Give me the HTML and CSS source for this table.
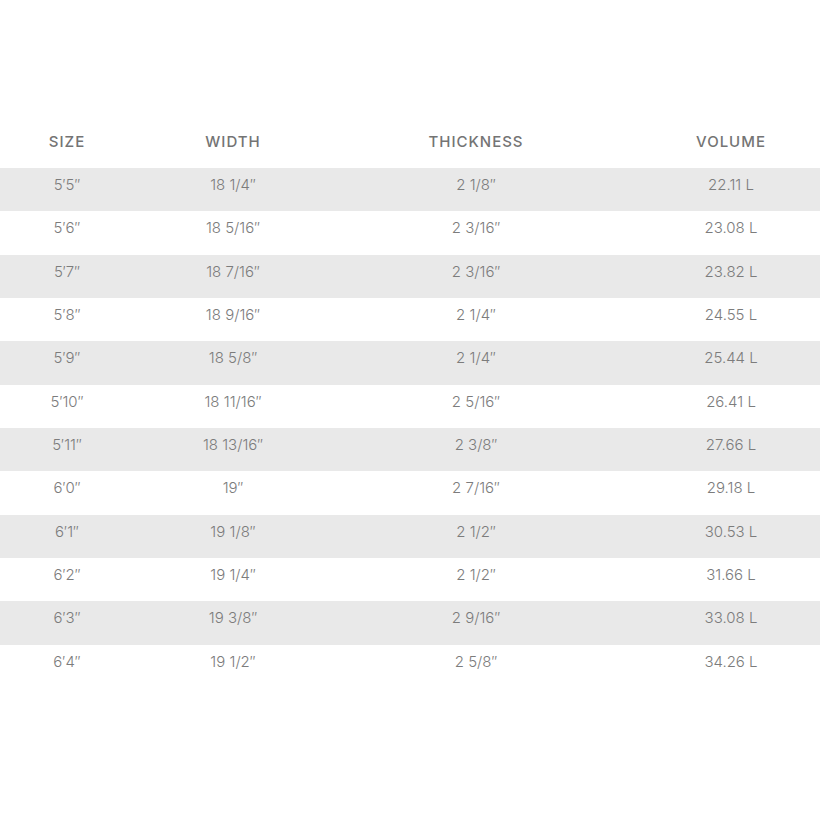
FILE: index.html
```html
<!DOCTYPE html>
<html>
<head>
<meta charset="utf-8">
<link rel="stylesheet" href="styles.css">
</head>
<body>
<div class="table">
  <div class="row head"><div class="c">SIZE</div><div class="c">WIDTH</div><div class="c">THICKNESS</div><div class="c c4">VOLUME</div></div>
  <div class="row alt"><div class="c">5′5″</div><div class="c">18 1/4″</div><div class="c">2 1/8″</div><div class="c c4">22.11 L</div></div>
  <div class="row"><div class="c">5′6″</div><div class="c">18 5/16″</div><div class="c">2 3/16″</div><div class="c c4">23.08 L</div></div>
  <div class="row alt"><div class="c">5′7″</div><div class="c">18 7/16″</div><div class="c">2 3/16″</div><div class="c c4">23.82 L</div></div>
  <div class="row"><div class="c">5′8″</div><div class="c">18 9/16″</div><div class="c">2 1/4″</div><div class="c c4">24.55 L</div></div>
  <div class="row alt"><div class="c">5′9″</div><div class="c">18 5/8″</div><div class="c">2 1/4″</div><div class="c c4">25.44 L</div></div>
  <div class="row"><div class="c">5′10″</div><div class="c">18 11/16″</div><div class="c">2 5/16″</div><div class="c c4">26.41 L</div></div>
  <div class="row alt"><div class="c">5′11″</div><div class="c">18 13/16″</div><div class="c">2 3/8″</div><div class="c c4">27.66 L</div></div>
  <div class="row"><div class="c">6′0″</div><div class="c">19″</div><div class="c">2 7/16″</div><div class="c c4">29.18 L</div></div>
  <div class="row alt"><div class="c">6′1″</div><div class="c">19 1/8″</div><div class="c">2 1/2″</div><div class="c c4">30.53 L</div></div>
  <div class="row"><div class="c">6′2″</div><div class="c">19 1/4″</div><div class="c">2 1/2″</div><div class="c c4">31.66 L</div></div>
  <div class="row alt"><div class="c">6′3″</div><div class="c">19 3/8″</div><div class="c">2 9/16″</div><div class="c c4">33.08 L</div></div>
  <div class="row"><div class="c">6′4″</div><div class="c">19 1/2″</div><div class="c">2 5/8″</div><div class="c c4">34.26 L</div></div>
</div>
</body>
</html>
```

FILE: styles.css
```css
html, body {
  margin: 0;
  padding: 0;
  background: #ffffff;
}
body {
  font-family: Inter, "Open Sans", sans-serif;
  font-size: 15px;
  font-weight: 300;
  color: #7c7c7c;
}
.table {
  padding-top: 120px;
}
.row {
  display: grid;
  grid-template-columns: 134px 198px 288px 1fr;
  height: 43.34px;
  line-height: 34px;
}
.row.head {
  height: 48px;
  line-height: 43px;
  color: #747474;
  font-weight: 500;
  letter-spacing: 1px;
}
.row.alt {
  background: #e9e9e9;
}
.c {
  text-align: center;
  white-space: nowrap;
}
.c4 {
  padding-left: 22px;
}
```
